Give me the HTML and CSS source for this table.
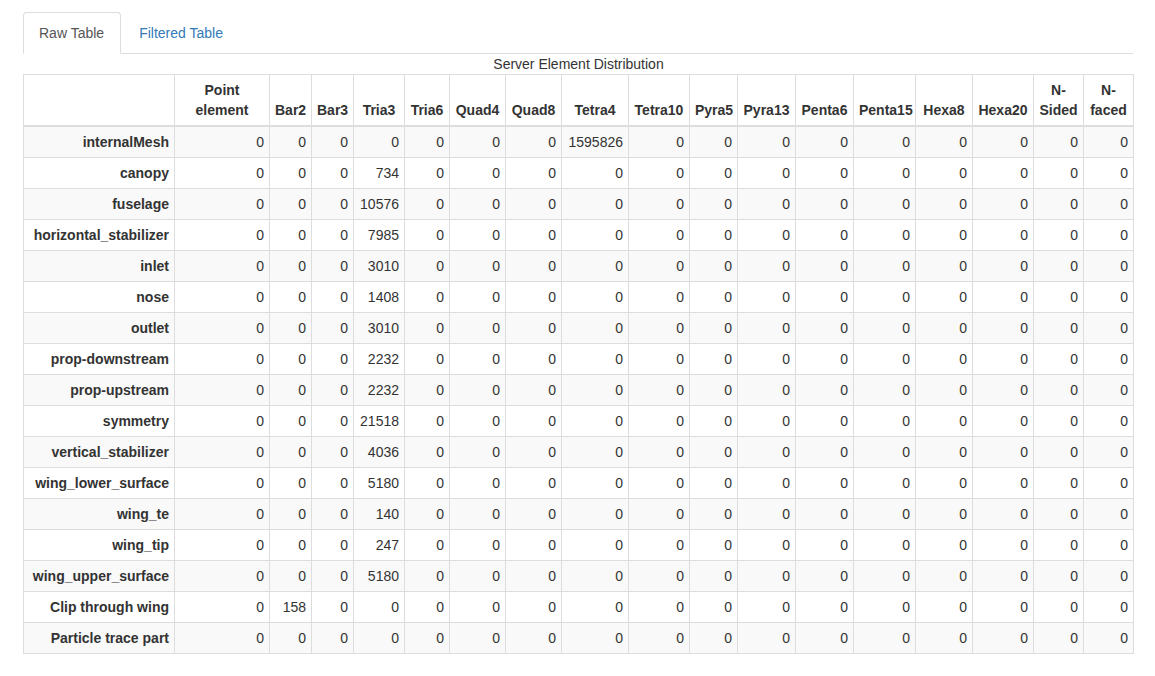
FILE: index.html
```html
<!DOCTYPE html>
<html>
<head>
<meta charset="utf-8">
<link rel="stylesheet" href="styles.css">
</head>
<body>
<div class="page">
  <ul class="tabs">
    <li class="tab active"><a>Raw Table</a></li>
    <li class="tab"><a>Filtered Table</a></li>
  </ul>
  <table class="grid">
    <caption>Server Element Distribution</caption>
    <colgroup>
      <col class="c-name"><col class="c-point"><col class="c-bar2"><col class="c-bar3"><col class="c-tria3"><col class="c-tria6"><col class="c-quad4"><col class="c-quad8"><col class="c-tetra4"><col class="c-tetra10"><col class="c-pyra5"><col class="c-pyra13"><col class="c-penta6"><col class="c-penta15"><col class="c-hexa8"><col class="c-hexa20"><col class="c-nsided"><col class="c-nfaced">
    </colgroup>
    <thead>
      <tr>
        <th></th><th>Point element</th><th>Bar2</th><th>Bar3</th><th>Tria3</th><th>Tria6</th><th>Quad4</th><th>Quad8</th><th>Tetra4</th><th>Tetra10</th><th>Pyra5</th><th>Pyra13</th><th>Penta6</th><th>Penta15</th><th>Hexa8</th><th>Hexa20</th><th>N-Sided</th><th>N-faced</th>
      </tr>
    </thead>
    <tbody>
      <tr><th>internalMesh</th><td>0</td><td>0</td><td>0</td><td>0</td><td>0</td><td>0</td><td>0</td><td>1595826</td><td>0</td><td>0</td><td>0</td><td>0</td><td>0</td><td>0</td><td>0</td><td>0</td><td>0</td></tr>
      <tr><th>canopy</th><td>0</td><td>0</td><td>0</td><td>734</td><td>0</td><td>0</td><td>0</td><td>0</td><td>0</td><td>0</td><td>0</td><td>0</td><td>0</td><td>0</td><td>0</td><td>0</td><td>0</td></tr>
      <tr><th>fuselage</th><td>0</td><td>0</td><td>0</td><td>10576</td><td>0</td><td>0</td><td>0</td><td>0</td><td>0</td><td>0</td><td>0</td><td>0</td><td>0</td><td>0</td><td>0</td><td>0</td><td>0</td></tr>
      <tr><th>horizontal_stabilizer</th><td>0</td><td>0</td><td>0</td><td>7985</td><td>0</td><td>0</td><td>0</td><td>0</td><td>0</td><td>0</td><td>0</td><td>0</td><td>0</td><td>0</td><td>0</td><td>0</td><td>0</td></tr>
      <tr><th>inlet</th><td>0</td><td>0</td><td>0</td><td>3010</td><td>0</td><td>0</td><td>0</td><td>0</td><td>0</td><td>0</td><td>0</td><td>0</td><td>0</td><td>0</td><td>0</td><td>0</td><td>0</td></tr>
      <tr><th>nose</th><td>0</td><td>0</td><td>0</td><td>1408</td><td>0</td><td>0</td><td>0</td><td>0</td><td>0</td><td>0</td><td>0</td><td>0</td><td>0</td><td>0</td><td>0</td><td>0</td><td>0</td></tr>
      <tr><th>outlet</th><td>0</td><td>0</td><td>0</td><td>3010</td><td>0</td><td>0</td><td>0</td><td>0</td><td>0</td><td>0</td><td>0</td><td>0</td><td>0</td><td>0</td><td>0</td><td>0</td><td>0</td></tr>
      <tr><th>prop-downstream</th><td>0</td><td>0</td><td>0</td><td>2232</td><td>0</td><td>0</td><td>0</td><td>0</td><td>0</td><td>0</td><td>0</td><td>0</td><td>0</td><td>0</td><td>0</td><td>0</td><td>0</td></tr>
      <tr><th>prop-upstream</th><td>0</td><td>0</td><td>0</td><td>2232</td><td>0</td><td>0</td><td>0</td><td>0</td><td>0</td><td>0</td><td>0</td><td>0</td><td>0</td><td>0</td><td>0</td><td>0</td><td>0</td></tr>
      <tr><th>symmetry</th><td>0</td><td>0</td><td>0</td><td>21518</td><td>0</td><td>0</td><td>0</td><td>0</td><td>0</td><td>0</td><td>0</td><td>0</td><td>0</td><td>0</td><td>0</td><td>0</td><td>0</td></tr>
      <tr><th>vertical_stabilizer</th><td>0</td><td>0</td><td>0</td><td>4036</td><td>0</td><td>0</td><td>0</td><td>0</td><td>0</td><td>0</td><td>0</td><td>0</td><td>0</td><td>0</td><td>0</td><td>0</td><td>0</td></tr>
      <tr><th>wing_lower_surface</th><td>0</td><td>0</td><td>0</td><td>5180</td><td>0</td><td>0</td><td>0</td><td>0</td><td>0</td><td>0</td><td>0</td><td>0</td><td>0</td><td>0</td><td>0</td><td>0</td><td>0</td></tr>
      <tr><th>wing_te</th><td>0</td><td>0</td><td>0</td><td>140</td><td>0</td><td>0</td><td>0</td><td>0</td><td>0</td><td>0</td><td>0</td><td>0</td><td>0</td><td>0</td><td>0</td><td>0</td><td>0</td></tr>
      <tr><th>wing_tip</th><td>0</td><td>0</td><td>0</td><td>247</td><td>0</td><td>0</td><td>0</td><td>0</td><td>0</td><td>0</td><td>0</td><td>0</td><td>0</td><td>0</td><td>0</td><td>0</td><td>0</td></tr>
      <tr><th>wing_upper_surface</th><td>0</td><td>0</td><td>0</td><td>5180</td><td>0</td><td>0</td><td>0</td><td>0</td><td>0</td><td>0</td><td>0</td><td>0</td><td>0</td><td>0</td><td>0</td><td>0</td><td>0</td></tr>
      <tr><th>Clip through wing</th><td>0</td><td>158</td><td>0</td><td>0</td><td>0</td><td>0</td><td>0</td><td>0</td><td>0</td><td>0</td><td>0</td><td>0</td><td>0</td><td>0</td><td>0</td><td>0</td><td>0</td></tr>
      <tr><th>Particle trace part</th><td>0</td><td>0</td><td>0</td><td>0</td><td>0</td><td>0</td><td>0</td><td>0</td><td>0</td><td>0</td><td>0</td><td>0</td><td>0</td><td>0</td><td>0</td><td>0</td><td>0</td></tr>
    </tbody>
  </table>
</div>
</body>
</html>
```

FILE: styles.css
```css
* { box-sizing: border-box; }
html, body { margin: 0; padding: 0; background: #fff; }
body {
  font-family: "Liberation Sans", Arial, sans-serif;
  font-size: 14px;
  line-height: 1.42857;
  color: #333;
}
.page { padding: 12px 22px 0 23px; }
.tabs {
  list-style: none;
  margin: 0;
  padding: 0;
  display: flex;
  border-bottom: 1px solid #ddd;
}
.tab { margin-bottom: -1px; margin-right: 2px; }
.tab a {
  display: block;
  padding: 10px 16px 10px 15px;
  line-height: 20px;
  border: 1px solid transparent;
  border-radius: 4px 4px 0 0;
  color: #337ab7;
  cursor: pointer;
}
.tab.active a {
  color: #555;
  background: #fff;
  border-color: #ddd #ddd transparent;
}
.grid {
  width: 1110px;
  table-layout: fixed;
  border-collapse: collapse;
  border: 1px solid #ddd;
}
.c-name { width: 151px; }
.c-point { width: 95px; }
.c-bar2, .c-bar3 { width: 42px; }
.c-tria3 { width: 51px; }
.c-tria6 { width: 45px; }
.c-quad4, .c-quad8 { width: 56px; }
.c-tetra4 { width: 67px; }
.c-tetra10 { width: 61px; }
.c-pyra5 { width: 48px; }
.c-pyra13, .c-penta6 { width: 58px; }
.c-penta15 { width: 62px; }
.c-hexa8 { width: 57px; }
.c-hexa20 { width: 61px; }
.c-nsided, .c-nfaced { width: 50px; }
.grid caption {
  caption-side: top;
  text-align: center;
  color: #333;
  padding: 0;
  line-height: 20px;
}
.grid th, .grid td {
  border: 1px solid #ddd;
  padding: 5px;
  line-height: 20px;
}
.grid thead th {
  vertical-align: bottom;
  text-align: center;
  border-bottom: 2px solid #ddd;
  font-weight: bold;
}
.grid tbody th { text-align: right; font-weight: bold; }
.grid tbody td { text-align: right; }
.grid tbody tr:nth-child(odd) { background: #f9f9f9; }
```
